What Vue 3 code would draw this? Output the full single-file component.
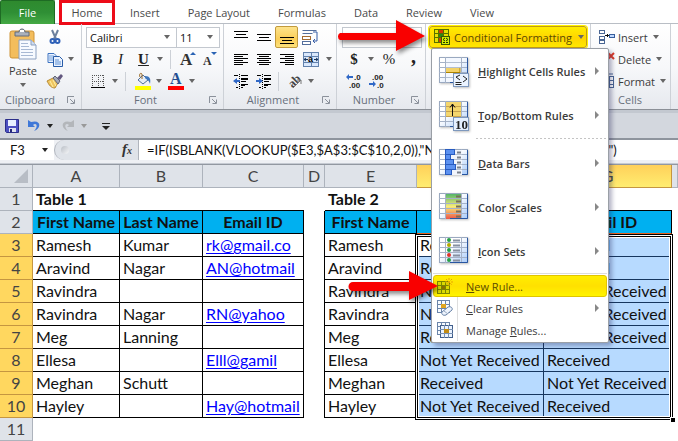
<script setup>
import { ref } from 'vue'

const tabs = ['Insert', 'Page Layout', 'Formulas', 'Data', 'Review', 'View']
const columns = ['A', 'B', 'C', 'D', 'E', 'F', 'G', '']
const formula = ref('=IF(ISBLANK(VLOOKUP($E3,$A$3:$C$10,2,0)),"Not Yet Received","" & "Received")')

const NYR = 'Not Yet Received'
const rows = [
  { n: 3, a: 'Ramesh', b: 'Kumar', c: 'rk@gmail.co', f: 'Received', g: 'Received' },
  { n: 4, a: 'Aravind', b: 'Nagar', c: 'AN@hotmail', f: 'Received', g: 'Received' },
  { n: 5, a: 'Ravindra', b: '', c: '', f: NYR, g: NYR },
  { n: 6, a: 'Ravindra', b: 'Nagar', c: 'RN@yahoo', f: NYR, g: NYR },
  { n: 7, a: 'Meg', b: 'Lanning', c: '', f: 'Received', g: NYR },
  { n: 8, a: 'Ellesa', b: '', c: 'Elll@gamil', f: NYR, g: 'Received' },
  { n: 9, a: 'Meghan', b: 'Schutt', c: '', f: 'Received', g: NYR },
  { n: 10, a: 'Hayley', b: '', c: 'Hay@hotmail', f: NYR, g: 'Received' },
]

const bigItems = [
  { icon: 'highlight', pre: '', key: 'H', post: 'ighlight Cells Rules' },
  { icon: 'top', pre: '', key: 'T', post: 'op/Bottom Rules', rule: true },
  { icon: 'bars', pre: '', key: 'D', post: 'ata Bars' },
  { icon: 'scales', pre: 'Color ', key: 'S', post: 'cales' },
  { icon: 'sets', pre: '', key: 'I', post: 'con Sets' },
]
const smallItems = [
  { icon: 'new', pre: '', key: 'N', post: 'ew Rule...' },
  { icon: 'clear', pre: '', key: 'C', post: 'lear Rules', sub: true },
  { icon: 'manage', pre: 'Manage ', key: 'R', post: 'ules...' },
]
const barWidths = [9, 5, 8, 10, 6]
const dotColors = ['#27a045', '#b5ab00', '#27a045', '#e0352b', '#27a045']
const cellActions = ['Insert', 'Delete', 'Format']
const aligns = [
  { name: 'Top Align', d: 'M1 2.5h14M3 5.5h10M1 8.5h14' },
  { name: 'Middle Align', d: 'M1 5.5h14M3 8.5h10M1 11.5h14' },
  { name: 'Bottom Align', d: 'M1 8.5h14M3 11.5h10M1 14.5h14', on: true },
]
const texts = [
  { name: 'Align Left', d: 'M1 3.5h14M1 5.5h9M1 7.5h14M1 9.5h9M1 11.5h14M1 13.5h9' },
  { name: 'Center', d: 'M1 3.5h14M3 5.5h10M1 7.5h14M3 9.5h10M1 11.5h14M3 13.5h10' },
  { name: 'Align Right', d: 'M1 3.5h14M6 5.5h9M1 7.5h14M6 9.5h9M1 11.5h14M6 13.5h9' },
]
</script>

<template>
  <div class="excel">
    <nav class="tabs">
      <button class="file">File</button>
      <button class="home">Home</button>
      <button v-for="t in tabs" :key="t" class="tab">{{ t }}</button>
    </nav>

    <div class="ribbon">
      <section class="group clipboard">
        <div class="body paste-body">
          <button class="paste">
            <svg width="28" height="32" viewBox="0 0 28 32">
              <rect x="1" y="3" width="24" height="27" rx="2" fill="#f3bd5c" stroke="#cf9436" />
              <path d="M6 8V4h4c0-4 6-4 6 0h4v4z" fill="#a9b0bb" stroke="#646d7a" />
              <rect x="11" y="2" width="4" height="2" fill="#fff" />
              <path d="M10 12h12l5 5v14H10z" fill="#f7faff" stroke="#8ba0c0" />
              <path d="M22 12v5h5" fill="#cfdcf0" stroke="#8ba0c0" />
              <path d="M12 15.500h7M12 18.500h8M12 21.500h12M12 24.500h12M12 27.500h12" stroke="#a8b9d4" />
            </svg>
            <span>Paste</span>
            <i class="caret"></i>
          </button>
          <div class="stack">
            <button class="ib" aria-label="Cut">
              <svg width="16" height="16" viewBox="0 0 16 16">
                <path d="M5 1l4 9M11 1L7 10" stroke="#6c809e" stroke-width="2" />
                <circle cx="5.500" cy="12" r="2" fill="none" stroke="#2f61b8" stroke-width="2" />
                <circle cx="10.500" cy="12" r="2" fill="none" stroke="#2f61b8" stroke-width="2" />
              </svg>
            </button>
            <div class="row">
              <button class="ib" aria-label="Copy">
                <svg width="16" height="16" viewBox="0 0 16 16">
                  <path d="M1 2.500h6l2 2v7H1z" fill="#eaf2ff" stroke="#3d73c0" />
                  <path d="M2 5h5M2 7h5M2 9h4" stroke="#72a0dc" />
                  <path d="M6.500 5.500h6l3 3v7h-9z" fill="#eaf2ff" stroke="#285ca8" />
                  <path d="M8 9h4M8 11h6M8 13h6" stroke="#5c90d4" />
                </svg>
              </button>
              <i class="caret"></i>
            </div>
            <button class="ib" aria-label="Format Painter">
              <svg width="18" height="16" viewBox="0 0 18 16">
                <path d="M1 8l6-3 5 5-3 5c-4 0-6-3-8-7z" fill="#efc55e" stroke="#b68a35" />
                <path d="M4 8l3 6M7 7l3 6" stroke="#fff0a6" />
                <path d="M7 5l2-2 5 5-2 3z" fill="#a4a9b7" stroke="#646778" />
                <path d="M11 5l4-4 2 2-3 4z" fill="#62577e" />
              </svg>
            </button>
          </div>
        </div>
        <footer><span>Clipboard</span><svg class="launch" width="8" height="8" viewBox="0 0 8 8"><path d="M.5 7V.5H7M3 3l4 4M7.500 3.500v4h-4" fill="none" stroke="#8b919b" /></svg></footer>
      </section>

      <section class="group font">
        <div class="body">
          <div class="row">
            <span class="combo wide"><select aria-label="Font"><option>Calibri</option></select><i class="caret"></i></span>
            <span class="combo size"><select aria-label="Font size"><option>11</option></select><i class="caret"></i></span>
          </div>
          <div class="row">
            <button class="ib serif bold">B</button>
            <button class="ib serif ital">I</button>
            <button class="ib serif bold und">U</button>
            <i class="caret"></i>
            <b class="sep"></b>
            <button class="ib" aria-label="Grow Font"><svg width="18" height="18" viewBox="0 0 18 18"><text x="1" y="15" class="ga" font-size="17">A</text><path d="M11 5l3-3 3 3z" fill="#2a63b4" /></svg></button>
            <button class="ib" aria-label="Shrink Font"><svg width="18" height="18" viewBox="0 0 18 18"><text x="1" y="15" class="ga" font-size="12">A</text><path d="M9 2h6l-3 3z" fill="#2a63b4" /></svg></button>
          </div>
          <div class="row">
            <button class="ib first" aria-label="Borders">
              <svg width="16" height="16" viewBox="0 0 16 16"><path d="M2 2.500h12M2 8.500h12M2.500 2v12M8.500 2v12M13.500 2v12" stroke="#555" stroke-dasharray="1 1" /><path d="M1 14.500h14" stroke="#000" /></svg>
            </button>
            <i class="caret"></i>
            <b class="sep"></b>
            <button class="ib" aria-label="Fill Color">
              <svg width="18" height="18" viewBox="0 0 18 18">
                <path d="M4 8l5-5 5 5-5 4z" fill="#e5edf7" stroke="#526f97" />
                <path d="M8 7V2c-2-2-3 1-2 3" fill="none" stroke="#9c6b26" />
                <path d="M11 4c5 0 6 3 5 8-1-4-3-4-5-6z" fill="#3e76bd" />
                <rect x="1" y="14" width="16" height="4" fill="#ffff00" />
              </svg>
            </button>
            <i class="caret"></i>
            <button class="ib" aria-label="Font Color"><svg width="18" height="18" viewBox="0 0 18 18"><text x="3" y="12" fill="#244f91" font-family="Liberation Serif" font-weight="bold" font-size="16">A</text><rect x="1" y="14" width="16" height="4" fill="#f00" /></svg></button>
            <i class="caret"></i>
          </div>
        </div>
        <footer><span>Font</span><svg class="launch" width="8" height="8" viewBox="0 0 8 8"><path d="M.5 7V.5H7M3 3l4 4M7.500 3.500v4h-4" fill="none" stroke="#8b919b" /></svg></footer>
      </section>

      <section class="group alignment">
        <div class="body">
          <div class="row">
            <button v-for="a in aligns" :key="a.name" class="ib" :class="{ on: a.on }" :aria-label="a.name">
              <svg width="16" height="16" viewBox="0 0 16 16"><path :d="a.d" stroke="#000" /></svg>
            </button>
            <button class="ib" aria-label="Wrap Text">
              <svg width="18" height="16" viewBox="0 0 18 16">
                <path d="M1.500 1.500h14M1.500 4.500h10" stroke="#536e9c" />
                <rect x="1.500" y="7.500" width="8" height="3" fill="#fff" stroke="#a56c32" /><rect x="1.500" y="12.500" width="8" height="3" fill="#fff" stroke="#536e9c" />
                <path d="M12 3h4v9h-4M14 10l-2 2 2 2" fill="none" stroke="#355ca6" />
              </svg>
            </button>
          </div>
          <div class="row">
            <button v-for="a in texts" :key="a.name" class="ib" :aria-label="a.name">
              <svg width="16" height="16" viewBox="0 0 16 16"><path :d="a.d" stroke="#000" /></svg>
            </button>
            <button class="ib merge" aria-label="Merge and Center">
              <svg width="16" height="15" viewBox="0 0 16 15"><rect x=".5" y=".5" width="15" height="14" fill="#d9e8fc" stroke="#6282ad" /><path d="M0 4.500h16M0 10.500h16M8.500 0v4M8.500 11v4" stroke="#6282ad" /><path d="M1 7.500h4M11 7.500h4M3 6L1 7.500 3 9M13 6l2 1.500L13 9" stroke="#17365f" fill="none" /><text x="5" y="10" font-family="Liberation Sans" font-weight="bold" font-size="9">a</text></svg>
            </button>
            <i class="caret"></i>
          </div>
          <div class="row">
            <button class="ib" aria-label="Decrease Indent"><svg width="16" height="16" viewBox="0 0 16 16"><path d="M1 2.500h4M8 2.500h7M8 5.500h7M8 8.500h5M8 11.500h7M3 14.500h2M8 14.500h2" stroke="#000" /><path d="M8 6.500h7M8 12.500h4" stroke="#000" /><path d="M6.500 1v15" stroke="#000" stroke-dasharray="1 1" /><path d="M0 8l4-3v2h3v2H4v2z" fill="#3068c6" /></svg></button>
            <button class="ib" aria-label="Increase Indent"><svg width="16" height="16" viewBox="0 0 16 16"><path d="M1 2.500h4M8 2.500h7M8 5.500h7M8 8.500h5M8 11.500h7M3 14.500h2M8 14.500h2" stroke="#000" /><path d="M8 6.500h7M8 12.500h4" stroke="#000" /><path d="M6.500 1v15" stroke="#000" stroke-dasharray="1 1" /><path d="M7 8L3 5v2H0v2h3v2z" fill="#3068c6" /></svg></button>
            <b class="sep near"></b>
            <button class="ib" aria-label="Orientation"><svg width="18" height="18" viewBox="0 0 18 18"><text x="4" y="14" transform="rotate(-45 8 12)" font-family="Liberation Serif" font-weight="bold" font-size="12" fill="#444">ab</text><path d="M7 16l8-8M11 8h4v4" fill="none" stroke="#777" /></svg></button>
            <i class="caret"></i>
          </div>
        </div>
        <footer><span>Alignment</span><svg class="launch" width="8" height="8" viewBox="0 0 8 8"><path d="M.5 7V.5H7M3 3l4 4M7.500 3.500v4h-4" fill="none" stroke="#8b919b" /></svg></footer>
      </section>

      <section class="group number">
        <div class="body">
          <div class="row"><span class="combo format"><select aria-label="Number format"><option></option></select></span></div>
          <div class="row">
            <button class="ib serif bold dollar">$</button>
            <i class="caret"></i>
            <button class="ib serif pct">%</button>
            <button class="ib serif bold comma">,</button>
          </div>
          <div class="row">
            <button class="ib" aria-label="Increase Decimal"><svg width="16" height="16" viewBox="0 0 16 16"><path d="M0 4l3-3v2h4v2H3v2z" fill="#3068c6" /><text x="8" y="7" class="dec">.0</text><text x="3" y="15" class="dec">.00</text></svg></button>
            <button class="ib" aria-label="Decrease Decimal"><svg width="16" height="16" viewBox="0 0 16 16"><path d="M7 11L4 8v2H0v2h4v2z" fill="#3068c6" /><text x="3" y="7" class="dec">.00</text><text x="8" y="15" class="dec">.0</text></svg></button>
          </div>
        </div>
        <footer><span>Number</span><svg class="launch" width="8" height="8" viewBox="0 0 8 8"><path d="M.5 7V.5H7M3 3l4 4M7.500 3.500v4h-4" fill="none" stroke="#8b919b" /></svg></footer>
      </section>

      <section class="group styles">
        <div class="cf-wrap">
          <button class="cf" aria-haspopup="menu">
            <svg width="16" height="16" viewBox="0 0 16 16">
              <rect x=".5" y=".5" width="14" height="13" fill="#e7e000" stroke="#567000" />
              <rect x="5" y="1" width="5" height="4" fill="#d53c00" /><rect x="5" y="5" width="4" height="4" fill="#2d8a16" /><rect x="5" y="9" width="4" height="4" fill="#d53c00" />
              <path d="M0 4.500h15M0 8.500h15M4.500 0v14M9.500 0v14" stroke="#567000" />
              <rect x="7.500" y="7.500" width="8" height="8" fill="#d6ed00" stroke="#385700" />
              <path d="M11 9l-2 1.500 2 1.500M9 13.500h2M12 9l2 1.500-2 1.500M12 13.500h2" fill="none" stroke="#1e3500" />
            </svg>
            <span>Conditional Formatting</span>
            <i class="caret"></i>
          </button>
          <svg class="arrow to-button" width="96" height="40" viewBox="0 0 96 40"><path d="M6 15h56V2l29 16-29 15V22H6a4 4 0 010-7z" fill="#f90000" /></svg>

          <div class="menu" role="menu">
            <template v-for="m in bigItems" :key="m.icon">
              <button class="big" role="menuitem">
                <svg width="32" height="32" viewBox="0 0 32 32" class="big-icon">
                  <defs>
                    <linearGradient id="paper" x1="0" y1="0" x2="1" y2="1"><stop offset=".4" stop-color="#fff" /><stop offset="1" stop-color="#a9cbfa" /></linearGradient>
                    <linearGradient id="heat" x1="0" y1="0" x2="0" y2="1"><stop offset="0" stop-color="#56b56a" /><stop offset=".5" stop-color="#f7ec78" /><stop offset="1" stop-color="#ee5548" /></linearGradient>
                  </defs>
                  <rect x="1.500" y="2.500" width="28" height="25" fill="url(#paper)" stroke="#9aa9c0" />
                  <rect v-if="m.icon === 'scales'" x="7" y="3" width="17" height="25" fill="url(#heat)" />
                  <path d="M1 7.500h29M1 12.500h29M1 17.500h29M1 22.500h29M7.500 2v26M23.500 2v26" stroke="#a5b2c7" />
                  <path d="M29.500 3v24.500H12" fill="none" stroke="#2855a0" />
                  <template v-if="m.icon === 'highlight'">
                    <rect x="8" y="3" width="15" height="24" fill="#f4f8ff" />
                    <path d="M8 7.500h15M8 12.500h15M8 17.500h15M8 22.500h15" stroke="#b3bfd1" />
                    <rect x="8" y="13" width="14" height="4" fill="#f3d267" /><path d="M8 17.500h14V13" fill="none" stroke="#ad8300" />
                    <rect x="15.500" y="18.500" width="15" height="13" fill="#eaf3ff" stroke="#7e98bd" />
                    <path d="M22 20l-4 2 4 3M17.500 27.500h6M17.500 29.500h6M25 21l4 3-4 3" fill="none" stroke="#222" />
                  </template>
                  <template v-if="m.icon === 'top'">
                    <rect x="8" y="3" width="15" height="14" fill="#f4d66d" /><path d="M8 7.500h15M8 12.500h15M8 17.500h15" stroke="#c7a24d" />
                    <path d="M14.500 5v12M12 8.500L14.500 5 17 8.500" stroke="#111" fill="none" />
                    <rect x="15.500" y="18.500" width="15" height="13" fill="#e5f0ff" stroke="#7e98bd" />
                    <text x="17" y="30" font-family="Liberation Serif" font-size="13" font-weight="bold" fill="#222">10</text>
                  </template>
                  <template v-if="m.icon === 'bars'">
                    <rect x="7" y="3" width="17" height="25" fill="#f2f5fc" />
                    <path d="M7 7.500h17M7 12.500h17M7 17.500h17M7 22.500h17" stroke="#b7c2d2" />
                    <rect v-for="(w, i) in barWidths" :key="i" x="7.500" :y="2.5 + i * 5" :width="w" height="5" fill="#5c91f0" stroke="#285bc0" />
                    <path d="M19 5.500h4M19 10.500h4M19 15.500h4M19 20.500h4M19 25.500h4" stroke="#79808b" stroke-width="2" />
                  </template>
                  <path v-if="m.icon === 'scales'" d="M18 5.500h5M18 10.500h5M18 15.500h5M18 20.500h5M18 25.500h5" stroke="#786f5a" stroke-width="2" />
                  <template v-if="m.icon === 'sets'">
                    <circle v-for="(c, i) in dotColors" :key="i" cx="11" :cy="5 + i * 5" r="2" :fill="c" />
                    <path d="M15 5.500h7M15 10.500h7M15 15.500h7M15 20.500h7M15 25.500h7" stroke="#8790a0" stroke-width="2" />
                  </template>
                </svg>
                <span>{{ m.pre }}<u>{{ m.key }}</u>{{ m.post }}</span>
                <i class="sub"></i>
              </button>
              <div v-if="m.rule" class="dash"></div>
            </template>
            <div class="solid"></div>
            <div class="small-list">
              <button v-for="s in smallItems" :key="s.icon" class="small" :class="s.icon" role="menuitem">
                <svg width="18" height="18" viewBox="0 0 18 18" class="small-icon">
                  <template v-if="s.icon === 'new'">
                    <rect x="1.500" y="4.500" width="12" height="12" fill="#dad900" stroke="#7b8500" /><path d="M1 8.500h13M1 12.500h13M5.500 4v13M9.500 4v13" stroke="#7b8500" /><rect x="6" y="9" width="3" height="3" fill="#8b7000" /><path d="M13 1v8M9 5h8M10 2l6 6M16 2l-6 6" stroke="#e9a500" stroke-dasharray="2 1" />
                  </template>
                  <template v-else-if="s.icon === 'clear'">
                    <rect x="1.500" y="1.500" width="12" height="12" fill="#f7fbff" stroke="#6b85aa" /><path d="M1 5.500h13M1 9.500h13M5.500 1v13M9.500 1v13" stroke="#6b85aa" /><rect x="5" y="5" width="5" height="4" fill="#dfa521" /><path d="M6 13l6-5c3-1 5 1 4 3l-6 5c-3 1-5-1-4-3z" fill="#eef4fd" stroke="#6680a5" /><path d="M8 12l4 3" stroke="#9aabc2" />
                  </template>
                  <template v-else>
                    <rect x="1.500" y="1.500" width="12" height="12" fill="#f7fbff" stroke="#6b85aa" /><path d="M1 5.500h4M1 9.500h4M5.500 1v4M9.500 1v4" stroke="#6b85aa" /><rect x="4.500" y="4.500" width="12" height="12" fill="#eaf3ff" stroke="#425f8b" /><path d="M4 8.500h13M4 12.500h13M8.500 4v13M12.500 4v13" stroke="#7890b2" /><rect x="8" y="8" width="5" height="4" fill="#c18b14" />
                  </template>
                </svg>
                <span>{{ s.pre }}<u>{{ s.key }}</u>{{ s.post }}</span>
                <i v-if="s.sub" class="sub"></i>
                <svg v-if="s.icon === 'new'" class="arrow to-rule" width="96" height="40" viewBox="0 0 96 40"><path d="M6 13h56V2l29 15-29 14V22H6a4 4 0 010-9z" fill="#f90000" /></svg>
              </button>
            </div>
          </div>
        </div>
      </section>

      <section class="group cells">
        <div class="body">
          <button v-for="c in cellActions" :key="c" class="action">
            <svg width="16" height="16" viewBox="0 0 16 16">
              <template v-if="c === 'Insert'"><rect x=".5" y="1.500" width="5" height="3" fill="#fff" stroke="#4a6693" /><rect x=".5" y="7.500" width="5" height="3" fill="#fff" stroke="#4a6693" /><rect x=".5" y="11.500" width="5" height="3" fill="#fff" stroke="#4a6693" /><rect x="10.500" y="5.500" width="5" height="3" fill="#bfd8ff" stroke="#365e9c" /><path d="M6 6.500h4M8.500 5v3" stroke="#111" /></template>
              <template v-else-if="c === 'Delete'"><rect x=".5" y="5.500" width="6" height="3" fill="#fff" stroke="#4a6693" /><path d="M9 2l6 6M15 2L9 8" stroke="#e23a26" stroke-width="2" /></template>
              <template v-else><rect x="2.500" y="3.500" width="12" height="11" fill="#fff" stroke="#4a6693" /><path d="M3 7.500h12M3 11.500h12M6.500 3v12M10.500 3v12M8 1h6" stroke="#4a6693" /></template>
            </svg>
            <span>{{ c }}</span><i class="caret"></i>
          </button>
        </div>
        <footer><span>Cells</span></footer>
      </section>
    </div>

    <div class="quick">
      <button class="qb" aria-label="Save"><svg width="14" height="14" viewBox="0 0 14 14"><path d="M.5 .5h13v13h-12l-1-1z" fill="#4c50c0" stroke="#2b2e8a" /><rect x="3" y="1" width="8" height="6" fill="#e8f0ff" /><rect x="4" y="9" width="7" height="4" fill="#dfe3ef" /><rect x="5" y="10" width="2" height="3" fill="#25287a" /></svg></button>
      <button class="qb undo" aria-label="Undo"><svg width="14" height="14" viewBox="0 0 14 14"><path d="M1 1v7h7L6 6c3-3 6 1 1 6 8-3 7-12-3-9z" fill="#3f78d8" /></svg></button>
      <i class="caret dark"></i>
      <button class="qb redo" aria-label="Redo"><svg width="14" height="14" viewBox="0 0 14 14"><path d="M13 1v7H6l2-2C5 3 2 7 7 12-1 9 0 0 10 3z" fill="#b3b6ba" /></svg></button>
      <i class="caret dim"></i>
      <button class="qb more" aria-label="Customize"><svg width="8" height="8" viewBox="0 0 8 8"><path d="M0 1.500h8" stroke="#222" /><path d="M0 4h8L4 8z" fill="#222" /></svg></button>
    </div>

    <div class="formula">
      <label class="name"><input value="F3" aria-label="Name Box" /><i class="caret dark"></i></label>
      <div class="fx"><i class="knob"></i><em>f<small>x</small></em></div>
      <input v-model="formula" class="entry" aria-label="Formula Bar" />
    </div>

    <table class="sheet">
      <colgroup><col class="ch" /><col class="ca" /><col class="cb" /><col class="cc" /><col class="cd" /><col class="ce" /><col class="cf-col" /><col class="cg" /><col /></colgroup>
      <thead>
        <tr>
          <th class="corner"><svg width="14" height="14" viewBox="0 0 14 14"><path d="M14 0v14H0z" fill="#b8bdc5" /></svg></th>
          <th v-for="(c, i) in columns" :key="i" :class="{ sel: c === 'F' || c === 'G' }">{{ c }}</th>
        </tr>
      </thead>
      <tbody>
        <tr class="title">
          <th>1</th><td class="strong b" colspan="3">Table 1</td><td></td><td class="strong b">Table 2</td><td class="b"></td><td class="b"></td><td></td>
        </tr>
        <tr class="heads">
          <th>2</th><td class="hd">First Name</td><td class="hd">Last Name</td><td class="hd">Email ID</td><td class="r"></td>
          <td class="hd">First Name</td><td class="hd edge">Last Name</td><td class="hd edge">Email ID</td><td></td>
        </tr>
        <tr v-for="r in rows" :key="r.n">
          <th class="sel">{{ r.n }}</th>
          <td class="bx">{{ r.a }}</td><td class="bx">{{ r.b }}</td><td class="bx"><a v-if="r.c" :href="'mailto:' + r.c">{{ r.c }}</a></td>
          <td class="r"></td>
          <td class="bx">{{ r.a }}</td>
          <td class="bx pick" :class="{ active: r.n === 3 }">{{ r.f }}<div v-if="r.n === 3" class="range"><i></i></div></td>
          <td class="bx pick">{{ r.g }}</td><td></td>
        </tr>
        <tr class="last"><th>11</th><td colspan="8"></td></tr>
      </tbody>
    </table>
  </div>
</template>

<style>
body { margin: 0; background: #fff; overflow: hidden; }
</style>

<style scoped>
.excel { font-family: "Open Sans", sans-serif; font-size: 11px; color: #3b3b3b; overflow: hidden; }
.excel * { box-sizing: border-box; }
button { font: inherit; color: inherit; background: none; border: 0; padding: 0; margin: 0; white-space: nowrap; }
svg { display: block; flex: none; overflow: visible; }
i { flex: none; }

.tabs { display: flex; height: 24px; background: #fff; border-bottom: 1px solid #b9bec5; }
.tabs button { height: 24px; font-size: 11px; color: #4a4a4a; }
.tabs .file { width: 55px; color: #fff; background: linear-gradient(#2e8a2e, #2f8f35 50%, #44a944); border: 1px solid #1e6b24; border-bottom: 0; border-radius: 2px 2px 0 0; }
.tabs .home { width: 56px; margin: 0 1px 0 4px; border: 3px solid #ed0c18; height: 25px; background: #fff; }
.tabs .tab { padding: 0 14px; }

.ribbon { display: flex; height: 86px; background: linear-gradient(#fff, #f7f8fa 50%, #e6e9ee); border-bottom: 1px solid #8b9097; }
.group { display: flex; flex-direction: column; justify-content: space-between; border-right: 1px solid #cdd1d7; padding-top: 2px; flex: none; }
.body { display: flex; flex-direction: column; }
.row { display: flex; align-items: center; height: 22px; }
.group footer { display: flex; align-items: center; justify-content: center; height: 17px; padding: 0 6px 1px 0; color: #68707c; line-height: 16px; }
.group footer span { flex: 1; text-align: center; }
.clipboard { width: 82px; }
.group.clipboard footer { padding-left: 5px; }
.group.clipboard footer span { text-align: left; }
.font { width: 142px; }
.alignment { width: 113px; }
.number { width: 89px; }
.styles { width: 165px; }
.cells { width: 80px; }
.cells footer { padding: 0 1px 1px 0; }
.ib { display: flex; align-items: center; justify-content: center; width: 23px; height: 22px; flex: none; }
.caret { border: 3px solid transparent; border-top: 4px solid #666; border-bottom: 0; width: 6px; height: 4px; margin: 0 2px; }
.caret.dark { border-top-color: #222; }
.caret.dim { border-top-color: #999; }
.sep { width: 1px; height: 19px; background: #cdd1d7; margin: 0 5px; }
.sep.near { margin: 0 4px 0 3px; }

.paste-body { flex-direction: row; }
.paste { width: 44px; display: flex; flex-direction: column; align-items: center; padding: 2px 0 0 2px; }
.paste span { line-height: 18px; padding-top: 2px; }
.paste .caret { margin-top: 3px; }
.stack .ib { width: 22px; }

.font .body { padding-left: 4px; }
.combo { display: grid; grid-template-columns: 1fr 14px; align-items: center; height: 21px; border: 1px solid #c3c8cf; background: #fff; }
.combo + .combo { border-left: 0; }
.combo select { grid-area: 1 / 1 / 2 / 3; appearance: none; border: 0; background: none; font: 11px "Open Sans", sans-serif; color: #111; padding: 0 0 0 3px; height: 19px; width: 100%; }
.combo .caret { grid-area: 1 / 2; pointer-events: none; }
.combo.wide { width: 91px; }
.combo.size { width: 43px; }
.combo.format { width: 80px; }
.serif { font-family: "Liberation Serif", serif; font-size: 15px; color: #222; }
.bold { font-weight: bold; }
.ital { font-style: italic; }
.und { text-decoration: underline; }
.ga { font-family: "Liberation Serif", serif; font-weight: bold; fill: #333; }
.first { width: 24px; }
.alignment .body { padding-left: 5px; }
.on { background: linear-gradient(#fde38c, #fbce58 60%, #fde27b); border: 1px solid #c29a3c; border-radius: 2px; }
.merge { width: 26px; }
.number .body { padding-left: 5px; }
.dollar { width: 24px; }
.pct { width: 26px; }
.comma { font-size: 20px; line-height: 12px; padding-bottom: 6px; }
.dec { font: bold 8px "Liberation Sans", sans-serif; fill: #222; }

.cf-wrap { position: relative; width: 158px; margin-left: 3px; }
.cf { width: 100%; height: 22px; display: flex; align-items: center; gap: 4px; padding: 0 1px 0 4px; background: linear-gradient(#ffee00, #ffd400 55%, #ffe800); border: 1px solid #c09a16; border-radius: 3px; box-shadow: 0 0 0 1px #fff100; color: #5b4c00; }
.cf span { flex: 1; text-align: left; }
.arrow { position: absolute; pointer-events: none; filter: drop-shadow(2px 3px 2px rgba(0, 0, 0, .45)); z-index: 3; }
.to-button { left: -95px; top: -8px; }
.to-rule { left: -87px; top: -7px; }

.menu { position: absolute; z-index: 2; left: 2px; top: 22px; width: 178px; padding: 0 1px 1px; background: #fff; border: 1px solid #9a9fa6; border-radius: 2px; box-shadow: 3px 3px 4px rgba(40, 40, 90, .35); }
.big { display: flex; align-items: center; width: 100%; height: 44px; padding: 0 8px 0 5px; gap: 8px; font-weight: 600; }
.big span, .small span { flex: 1; text-align: left; }
.big-icon { filter: drop-shadow(1px 1px 1px rgba(0, 0, 0, .25)); }
.sub { width: 4px; height: 8px; border: 4px solid transparent; border-left: 4px solid #888; border-right: 0; }
.dash { height: 4px; margin-left: 43px; background: repeating-linear-gradient(90deg, #c4c4c4 0 2px, transparent 2px 4px) 0 1px / 100% 1px no-repeat; }
.solid { height: 2px; border-top: 1px solid #dcdcdc; }
.small-list { background: linear-gradient(90deg, transparent 24px, #dedede 24px, #dedede 25px, transparent 25px); }
.small { position: relative; display: flex; align-items: center; width: 100%; height: 22px; padding: 0 8px 0 3px; gap: 12px; }
.small.new { background: linear-gradient(#ffee00, #ffe000 50%, #fff400); border: 1px solid #e0c400; border-radius: 3px; padding-left: 2px; color: #5b4c00; }

.action { display: flex; align-items: center; height: 22px; padding-left: 8px; gap: 3px; }

.quick { display: flex; align-items: center; height: 30px; padding-left: 5px; background: #d3d7de; border-top: 3px solid #c3c8d0; border-bottom: 2px solid #8e949d; }
.qb { width: 14px; height: 20px; display: flex; align-items: center; justify-content: center; }
.undo { margin: 0 4px 0 8px; }
.redo { margin: 0 4px 0 6px; }
.more { margin-left: 10px; }

.formula { display: flex; height: 24px; background: #eef0f4; border-bottom: 1px solid #c5cad2; padding-bottom: 3px; }
.formula input { border: 0; background: none; padding: 0; margin: 0; font: 13px Lato, sans-serif; color: #111; outline: 0; }
.name { width: 54px; display: flex; align-items: center; background: #fff; }
.formula .name input { width: 40px; padding-left: 10px; }
.fx { display: flex; align-items: center; justify-content: space-between; width: 85px; padding: 0 6px; background: #dfe3e9; border: 1px solid #b0b5bd; border-width: 0 1px; border-radius: 10px 0 0 10px; }
.knob { width: 8px; height: 8px; border-radius: 50%; background: linear-gradient(135deg, #b9bec6, #f5f6f8); }
.fx em { font: italic bold 15px "Liberation Serif", serif; color: #333; line-height: 18px; }
.fx small { font-size: 10px; }
.formula .entry { flex: 1; min-width: 0; padding-left: 8px; background: #fff; }

.sheet { width: 100%; table-layout: fixed; border-collapse: separate; border-spacing: 0; font: 16px Lato, sans-serif; color: #111; border-top: 1px solid #9298a1; }
.ch { width: 33px; } .ca { width: 87px; } .cb { width: 83px; } .cc { width: 101px; } .cd { width: 21px; } .ce { width: 92px; } .cf-col { width: 127px; } .cg { width: 128px; }
.sheet tr { height: 23px; }
.sheet th, .sheet td { height: 23px; padding: 0 0 0 3px; line-height: 22px; white-space: nowrap; overflow: hidden; text-align: left; border: 0 solid #000; }
.sheet th { font-weight: normal; color: #444; background: #dfe3e9; border: 0 solid #adb3bc; border-width: 0 1px 1px 0; text-align: center; padding: 0; }
.sheet th.sel { background: #ffd75f; border-color: #c59640; }
.sheet thead th.sel { background: linear-gradient(#ffd05a, #ffed70); }
.corner svg { margin-left: 14px; }
.sheet .strong { font-weight: bold; }
.sheet .b { border-bottom-width: 1px; }
.sheet .r { border-right-width: 1px; }
.sheet .bx, .sheet .hd { border-width: 0 1px 1px 0; }
.sheet .hd { background: #00b0f0; font-weight: bold; text-align: center; padding: 0; }
.sheet .edge { border-bottom-color: #e8601c; }
.sheet .pick { background: #b7daff; border-color: #16365f; }
.sheet .pick.active { position: relative; background: #fff; overflow: visible; }
.sheet a { color: #00f; text-decoration: underline; text-underline-offset: 2px; }
.range { position: absolute; left: -2px; top: 0; width: 258px; height: 186px; border: 1px solid #000; box-shadow: inset 0 0 0 1px #fff, inset 0 0 0 2px #000, inset 0 0 0 3px #fff; pointer-events: none; z-index: 1; }
.range i { position: absolute; right: -3px; bottom: -3px; width: 5px; height: 5px; background: #000; border: 1px solid #fff; border-width: 1px 0 0 1px; }
.last td { border: 0; }
</style>
